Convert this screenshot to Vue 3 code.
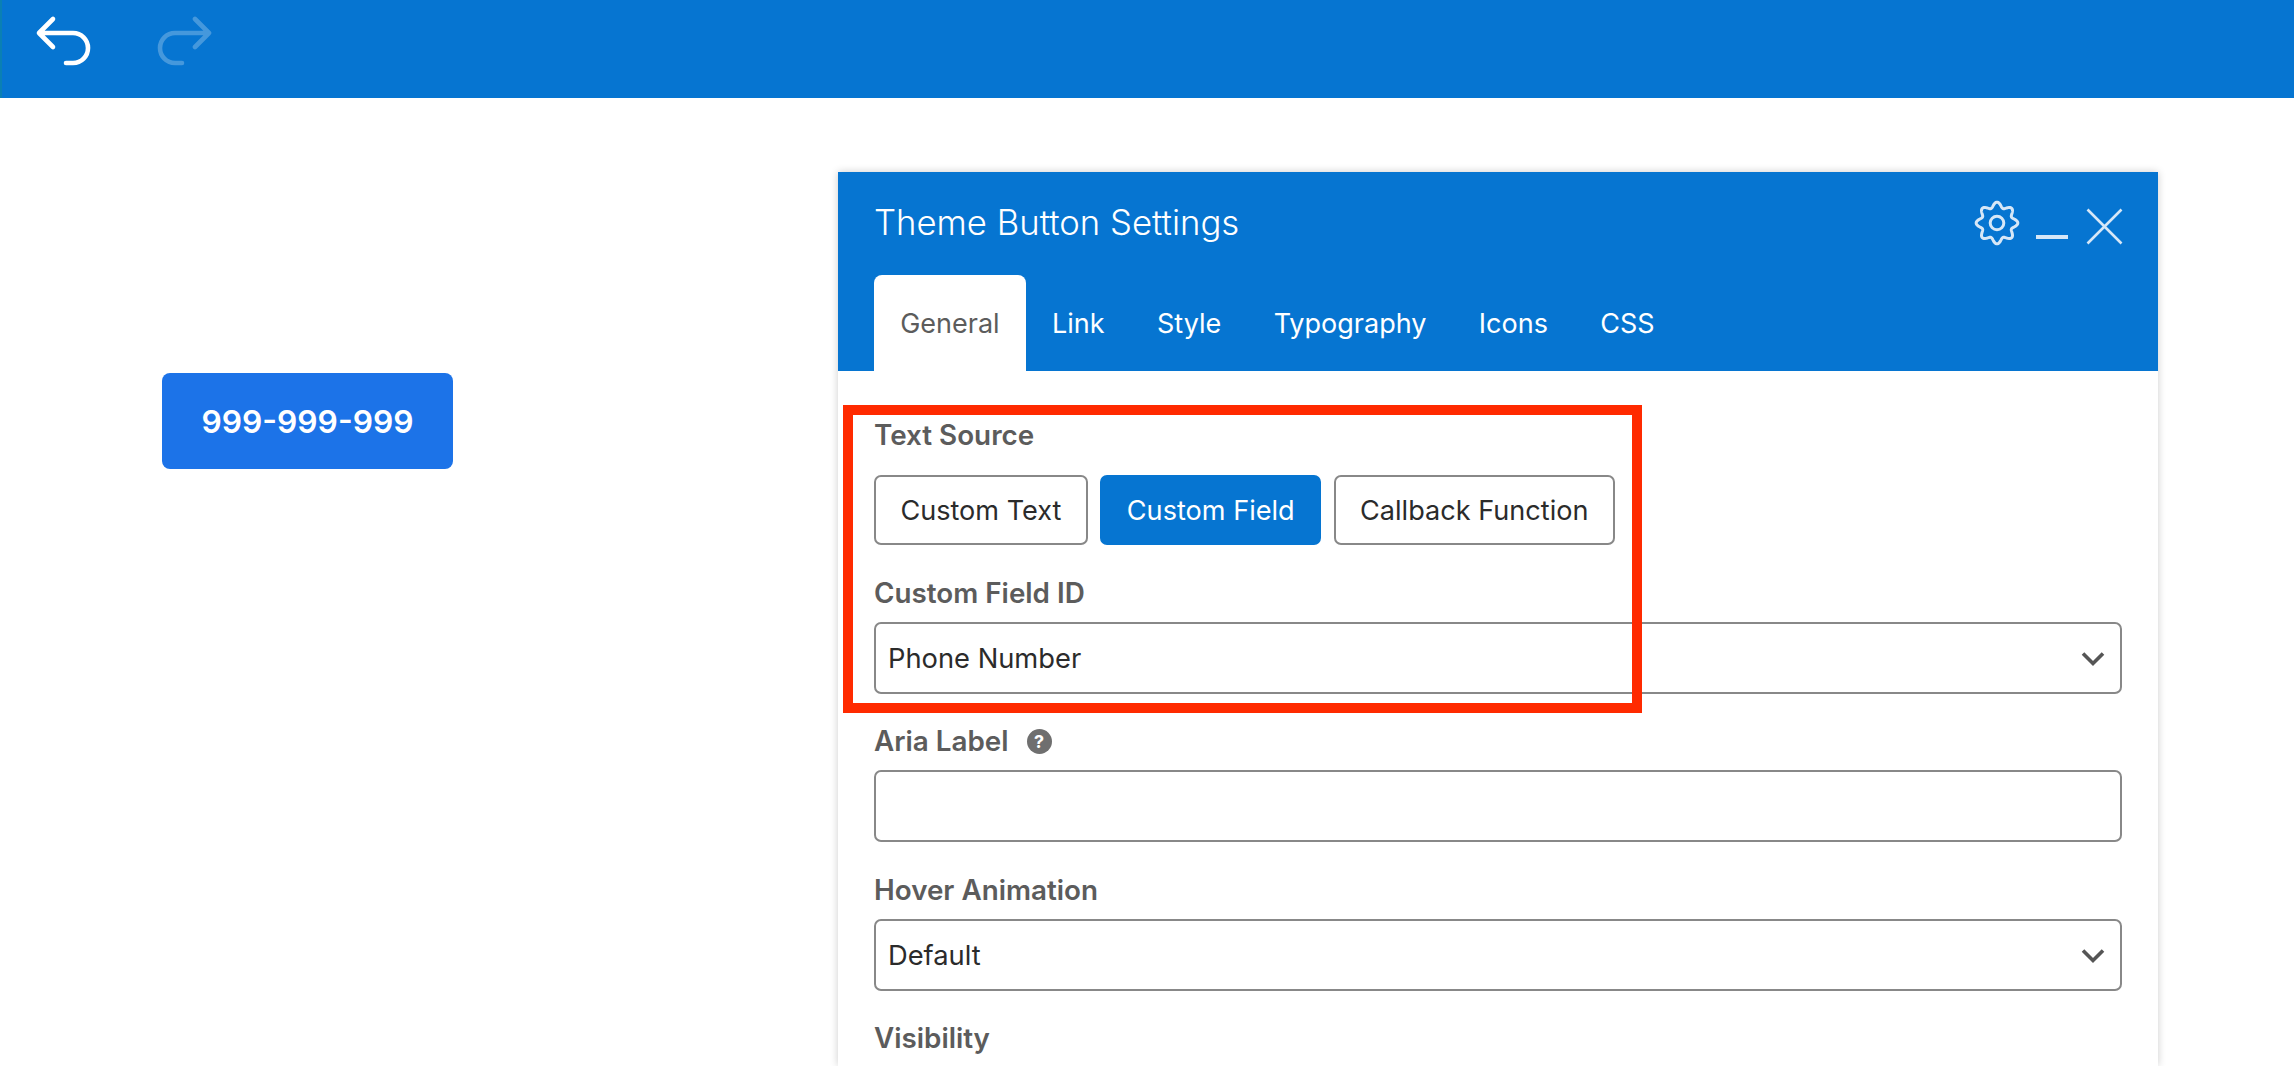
<script setup>
const tabs = ["General", "Link", "Style", "Typography", "Icons", "CSS"];
const sources = ["Custom Text", "Custom Field", "Callback Function"];

// wavy outline for the settings cog
const cogPath = (() => {
  let d = "";
  for (let i = 0; i < 240; i++) {
    const t = (i / 240) * Math.PI * 2;
    const r = 18.2 + 2.6 * Math.cos(8 * t);
    const x = 24 + r * Math.sin(t);
    const y = 24 - r * Math.cos(t);
    d += (i === 0 ? "M" : "L") + x.toFixed(2) + " " + y.toFixed(2);
  }
  return d + "Z";
})();
</script>

<template>
  <div class="page">
    <header class="topbar">
      <button class="history">
        <svg width="68" height="54" viewBox="0 0 68 54">
          <path d="M20 5 6 19 20 33M6 19h34a15 15 0 0 1 0 30h-7" />
        </svg>
      </button>
      <button class="history disabled">
        <svg width="68" height="54" viewBox="0 0 68 54">
          <path d="M46 5 60 19 46 33M60 19H26a15 15 0 0 0 0 30h7" />
        </svg>
      </button>
    </header>

    <main class="workspace">
      <section class="preview">
        <a class="theme-button">999-999-999</a>
      </section>

      <section class="panel">
        <div class="panel-head">
          <div class="title-row">
            <h2>Theme Button Settings</h2>
            <div class="actions">
              <svg class="cog" width="48" height="48" viewBox="0 0 48 48">
                <path :d="cogPath" />
                <circle cx="24" cy="24" r="6.8" />
              </svg>
              <span class="minimize"></span>
              <svg class="close" width="37" height="37" viewBox="0 0 37 37">
                <path d="M1.5 1.5l34 34M35.5 1.5l-34 34" />
              </svg>
            </div>
          </div>
          <nav class="tabs">
            <a v-for="(tab, i) in tabs" :key="tab" class="tab" :class="{active: i === 0}">{{ tab }}</a>
          </nav>
        </div>

        <div class="panel-body">
          <div class="annotation"></div>

          <div class="field">
            <label>Text Source</label>
            <div class="button-group">
              <button v-for="(s, i) in sources" :key="s" class="choice" :class="{selected: i === 1}">{{ s }}</button>
            </div>
          </div>

          <div class="field">
            <label>Custom Field ID</label>
            <div class="select">
              <span>Phone Number</span>
              <svg width="24" height="16" viewBox="0 0 24 16"><path d="M2 2.5l10 10 10-10" /></svg>
            </div>
          </div>

          <div class="field">
            <label>Aria Label <i class="help">?</i></label>
            <div class="select"></div>
          </div>

          <div class="field hover-field">
            <label>Hover Animation</label>
            <div class="select">
              <span>Default</span>
              <svg width="24" height="16" viewBox="0 0 24 16"><path d="M2 2.5l10 10 10-10" /></svg>
            </div>
          </div>

          <div class="field">
            <label>Visibility</label>
          </div>
        </div>
      </section>
    </main>
  </div>
</template>

<style scoped>
.page {
  width: 2294px;
  height: 1066px;
  overflow: hidden;
  background: #fff;
  font-family: Inter, "Liberation Sans", sans-serif;
}

.topbar {
  height: 98px;
  background: #0675d1;
  display: flex;
  align-items: flex-start;
  padding-left: 31px;
  padding-top: 14px;
  gap: 48px;
  box-sizing: border-box;
  border-left: 2px solid #0a80b4;
}

.history {
  border: none;
  background: none;
  padding: 0;
  height: 54px;
  width: 68px;
}

.history path {
  fill: none;
  stroke: #fff;
  stroke-width: 4.6;
  stroke-linecap: round;
  stroke-linejoin: round;
}

.history.disabled {
  opacity: 0.25;
}

.workspace {
  display: flex;
  padding-top: 74px;
  height: 968px;
  box-sizing: border-box;
}

.preview {
  width: 838px;
  flex: none;
  box-sizing: border-box;
  padding: 201px 0 0 162px;
}

.theme-button {
  display: flex;
  align-items: center;
  justify-content: center;
  width: 291px;
  height: 96px;
  background: #1c73e8;
  border-radius: 8px;
  color: #fff;
  font-size: 31.7px;
  font-weight: 600;
}

.panel {
  width: 1320px;
  flex: none;
  background: #fff;
  box-shadow: 0 0 8px rgba(0, 0, 0, 0.2);
}

.panel-head {
  background: #0675d1;
  height: 199px;
}

.title-row {
  height: 103px;
  display: flex;
  justify-content: space-between;
  align-items: flex-start;
  padding: 0 35px 0 36px;
}

h2 {
  margin: 28px 0 0;
  color: #fff;
  font-size: 34.7px;
  line-height: 44px;
  font-weight: 300;
}

.actions {
  display: flex;
  align-items: flex-start;
  padding-top: 27px;
}

.cog {
  margin-right: 15px;
}

.cog path,
.cog circle {
  fill: none;
  stroke: #d6e7f7;
  stroke-width: 3;
}

.minimize {
  width: 32px;
  height: 4px;
  margin-top: 36px;
  margin-right: 18px;
  background: #d6e7f7;
}

.close {
  margin-top: 9px;
}

.close path {
  fill: none;
  stroke: #d6e7f7;
  stroke-width: 2.6;
}

.tabs {
  display: flex;
  padding-left: 36px;
}

.tab {
  height: 96px;
  padding: 0 26.2px;
  display: flex;
  align-items: center;
  color: #fff;
  font-size: 27px;
  border-radius: 8px 8px 0 0;
}

.tab.active {
  background: #fff;
  color: #5c5c5c;
}

.panel-body {
  position: relative;
  padding: 46px 36px 0;
}

/* red highlight drawn on top of the form */
.annotation {
  position: absolute;
  left: 5px;
  top: 34px;
  width: 799px;
  height: 308px;
  box-sizing: border-box;
  border: 10px solid #ff2a00;
  pointer-events: none;
  z-index: 2;
}

.field + .field {
  margin-top: 29px;
}

.field.hover-field {
  margin-top: 30px;
}

label {
  display: flex;
  align-items: center;
  gap: 18px;
  height: 36px;
  margin-bottom: 11px;
  color: #5c5c5c;
  font-size: 27.8px;
  font-weight: 600;
}

.help {
  width: 25px;
  height: 25px;
  border-radius: 50%;
  background: #6f6f6f;
  color: #fff;
  font-size: 18px;
  font-style: normal;
  font-weight: 700;
  display: flex;
  align-items: center;
  justify-content: center;
}

.button-group {
  display: flex;
  gap: 12.6px;
  margin-top: 22px;
  padding-bottom: 1px;
}

.choice {
  height: 70px;
  padding: 0 24.4px;
  background: #fff;
  border: 2px solid #888;
  border-radius: 7px;
  color: #2b2b2b;
  font-family: inherit;
  font-size: 27.1px;
}

.choice.selected {
  background: #0675d1;
  border-color: #0675d1;
  color: #fff;
}

.select {
  height: 72px;
  box-sizing: border-box;
  border: 2px solid #888;
  border-radius: 7px;
  display: flex;
  align-items: center;
  justify-content: space-between;
  padding: 0 15px 0 12px;
  color: #2b2b2b;
  font-size: 27.3px;
}

.select svg {
  margin-top: 2px;
}

.select path {
  fill: none;
  stroke: #555;
  stroke-width: 3.6;
}
</style>
